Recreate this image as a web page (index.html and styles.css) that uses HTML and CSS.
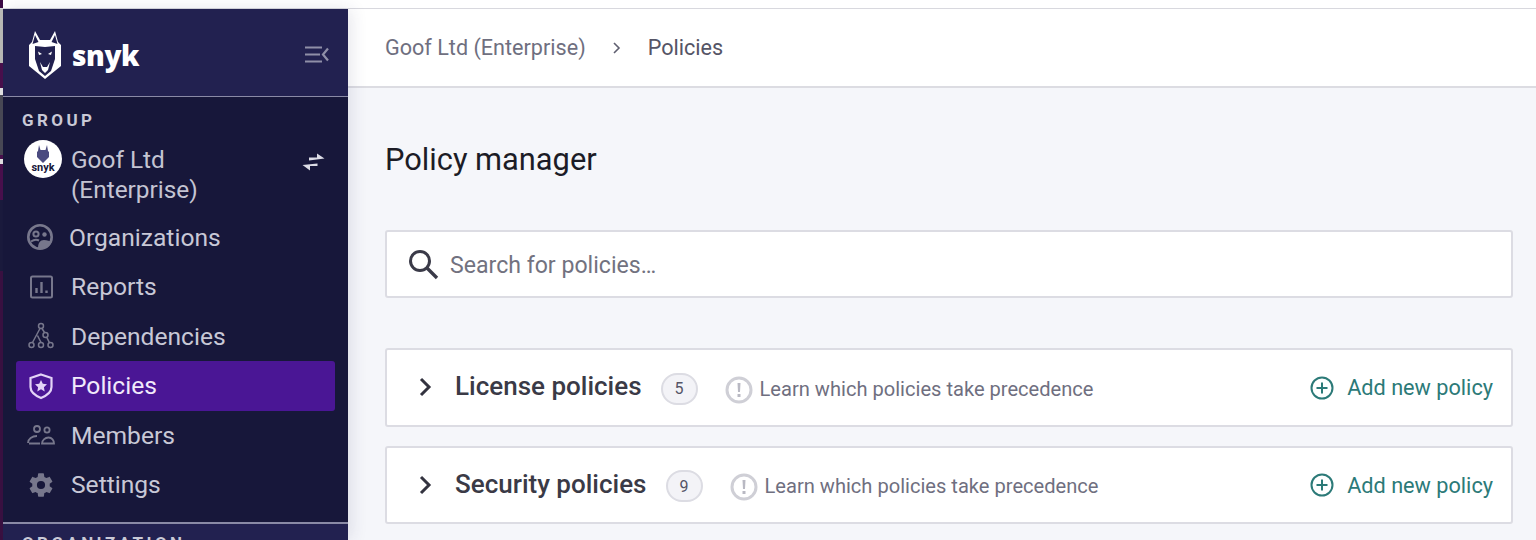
FILE: index.html
```html
<!DOCTYPE html>
<html lang="en">
<head>
<meta charset="utf-8">
<title>Policy manager</title>
<link rel="stylesheet" href="styles.css">
</head>
<body>
<div class="topstrip"><span class="topstrip-mark"></span></div>
<div class="shell">
  <div class="edge"></div>
  <aside class="sidebar">
    <div class="brand">
      <div class="logo">
        <svg class="logo-dog" width="32" height="48" viewBox="0 0 32 48">
          <path fill="#fff" d="M6 0l5 9h10l5-9 3 11 3 3v21L16 48 0 35V14l3-3z"/>
          <path fill="#222150" d="M6 4L3.500 13l6-2zM26 4l2.500 9-6-2z"/>
          <path fill="#222150" d="M6 15l10 1 10-1v13l-4 12-6 5-6-5-4-12z"/>
          <path fill="#fff" d="M11 31l2 8 3 3 3-3 2-8-3 5h-4zM9 20.500l4 2.500-3 1zM23 20.500l-4 2.500 3 1z"/>
        </svg>
        <span class="wordmark">snyk</span>
      </div>
      <svg class="collapse" width="24" height="17" viewBox="0 0 24 17"><path fill="none" stroke="#8f8fa8" stroke-width="2.200" d="M0 1.500h17M0 8.500h15M0 15.500h17M23 2.500l-5 6 5 6"/></svg>
    </div>
    <div class="group">
      <div class="group-label">GROUP</div>
      <div class="group-row">
        <div class="avatar">
          <svg width="14" height="18" viewBox="0 0 14 18"><path fill="#4b4b80" d="M3 0l1.500 5h5L11 0l1 6 1 1v5l-6 6-6-6V7l1-1z"/></svg>
          <span class="avatar-text">snyk</span>
        </div>
        <div class="group-name">Goof Ltd (Enterprise)</div>
        <svg class="swap" width="23" height="18" viewBox="0 0 23 18"><path fill="#dcdce6" d="M7 4.500h8V.5l7.500 5L7 7.500zM15.500 10.500V13H8v4.500L.5 12z"/></svg>
      </div>
    </div>
    <nav class="nav">
      <a class="nav-item nav-first">
        <svg width="28" height="28" viewBox="0 0 28 28"><circle cx="14" cy="14" r="11.700" fill="none" stroke="#77778c" stroke-width="2.600"/><circle cx="10" cy="11" r="2.600" fill="none" stroke="#77778c" stroke-width="2"/><circle cx="18.500" cy="11.500" r="2.200" fill="#77778c"/><path fill="#77778c" d="M12 25c0-5 2-8 6-8 3 0 6 1 7.500 2-1 4-6 7-11 7z"/><path fill="none" stroke="#77778c" stroke-width="2" d="M5 18.500c3-2 6-2 8-1"/></svg>
        <span>Organizations</span>
      </a>
      <a class="nav-item">
        <svg width="28" height="28" viewBox="0 0 28 28"><rect x="4" y="3.500" width="21" height="21" rx="1.500" fill="none" stroke="#77778c" stroke-width="2"/><path stroke="#77778c" stroke-width="2.400" d="M9.500 20v-5M14.500 20V9M19.500 20v-2.500"/></svg>
        <span>Reports</span>
      </a>
      <a class="nav-item">
        <svg width="28" height="28" viewBox="0 0 28 28" fill="none" stroke="#77778c" stroke-width="1.500"><circle cx="14" cy="4" r="2.500"/><circle cx="18.500" cy="13" r="2.500"/><circle cx="4.500" cy="23" r="2.500"/><circle cx="14" cy="23" r="2.500"/><circle cx="23.500" cy="23" r="2.500"/><path d="M13 6.500L5.500 20.500M15 6.500l2.500 4M10.500 13.500l3.500 7M19.800 15.300l2.600 5.300"/></svg>
        <span>Dependencies</span>
      </a>
      <a class="nav-item active">
        <svg width="28" height="28" viewBox="0 0 28 28"><path fill="none" stroke="#e3d3f7" stroke-width="2.200" d="M14 2.500l10.500 3.500v9c0 5-4.500 8.500-10.500 11C8 23.500 3.500 20 3.500 15V6z"/><path fill="#e3d3f7" d="M14 8l1.800 3.800 4.200.5-3.100 2.900.8 4.200-3.700-2.100-3.700 2.100.8-4.200L8 12.300l4.200-.5z"/></svg>
        <span>Policies</span>
      </a>
      <a class="nav-item">
        <svg width="28" height="28" viewBox="0 0 28 28" fill="none" stroke="#77778c" stroke-width="1.800"><circle cx="10" cy="8" r="3"/><circle cx="20" cy="9" r="2.600"/><path d="M1 22c0-4 4-7 9-7M2 22.500h11M15 22.500c0-3 3-6 6.500-6s5.500 3 5.500 6z"/></svg>
        <span>Members</span>
      </a>
      <a class="nav-item">
        <svg width="28" height="28" viewBox="0 0 24 24"><path fill="#77778c" d="M19.430 12.980c.04-.32.07-.64.07-.98s-.03-.66-.07-.98l2.110-1.650c.19-.15.24-.42.12-.64l-2-3.460c-.12-.22-.39-.3-.61-.22l-2.490 1c-.52-.4-1.080-.73-1.690-.98l-.38-2.650A.49.49 0 0 0 14 2h-4c-.25 0-.46.18-.49.42l-.38 2.650c-.61.25-1.170.59-1.690.98l-2.490-1c-.23-.09-.49 0-.61.22l-2 3.460c-.13.22-.07.49.12.64l2.110 1.650c-.04.32-.07.65-.07.98s.03.66.07.98l-2.110 1.650c-.19.15-.24.42-.12.64l2 3.460c.12.22.39.3.61.22l2.490-1c.52.4 1.080.73 1.690.98l.38 2.650c.03.24.24.42.49.42h4c.25 0 .46-.18.49-.42l.38-2.650c.61-.25 1.170-.59 1.690-.98l2.490 1c.23.09.49 0 .61-.22l2-3.460c.12-.22.07-.49-.12-.64l-2.110-1.650zM12 15.500a3.500 3.500 0 1 1 0-7 3.500 3.500 0 0 1 0 7z"/></svg>
        <span>Settings</span>
      </a>
    </nav>
    <div class="org"><span class="org-label">ORGANIZATION</span></div>
  </aside>
  <main class="main">
    <header class="crumbs">
      <span class="crumb">Goof Ltd (Enterprise)</span>
      <svg class="crumb-sep" width="10" height="14" viewBox="0 0 10 14"><path fill="none" stroke="#5f5f70" stroke-width="1.600" d="M2 2l5 5-5 5"/></svg>
      <span class="crumb-current">Policies</span>
    </header>
    <div class="content">
      <h1 class="title">Policy manager</h1>
      <div class="search">
        <svg width="34" height="34" viewBox="0 0 34 34"><circle cx="14" cy="14" r="9.500" fill="none" stroke="#3a3a48" stroke-width="3"/><path stroke="#3a3a48" stroke-width="3.400" d="M21 21l10 10"/></svg>
        <span class="placeholder">Search for policies…</span>
      </div>
      <section class="panel">
        <svg class="chev" width="14" height="20" viewBox="0 0 14 20"><path fill="none" stroke="#33333f" stroke-width="3" d="M2 2l8 8-8 8"/></svg>
        <h2 class="panel-title">License policies</h2>
        <span class="count">5</span>
        <svg class="info" width="28" height="28" viewBox="0 0 28 28"><circle cx="14" cy="14" r="12" fill="none" stroke="#cfcfd6" stroke-width="3"/><path fill="#b9b9c3" d="M12.500 7h3l-.5 9h-2zM12.500 18h3v3h-3z"/></svg>
        <span class="learn">Learn which policies take precedence</span>
        <a class="add"><svg width="24" height="24" viewBox="0 0 24 24" fill="none" stroke="#2c7a78" stroke-width="2"><circle cx="12" cy="12" r="10.500"/><path d="M12 6.500v11M6.500 12h11"/></svg><span>Add new policy</span></a>
      </section>
      <section class="panel">
        <svg class="chev" width="14" height="20" viewBox="0 0 14 20"><path fill="none" stroke="#33333f" stroke-width="3" d="M2 2l8 8-8 8"/></svg>
        <h2 class="panel-title">Security policies</h2>
        <span class="count">9</span>
        <svg class="info" width="28" height="28" viewBox="0 0 28 28"><circle cx="14" cy="14" r="12" fill="none" stroke="#cfcfd6" stroke-width="3"/><path fill="#b9b9c3" d="M12.500 7h3l-.5 9h-2zM12.500 18h3v3h-3z"/></svg>
        <span class="learn">Learn which policies take precedence</span>
        <a class="add"><svg width="24" height="24" viewBox="0 0 24 24" fill="none" stroke="#2c7a78" stroke-width="2"><circle cx="12" cy="12" r="10.500"/><path d="M12 6.500v11M6.500 12h11"/></svg><span>Add new policy</span></a>
      </section>
    </div>
  </main>
</div>
</body>
</html>
```
FILE: styles.css
```css
* { box-sizing: border-box; }
html, body { margin: 0; height: 540px; overflow: hidden; background: #fff; }
body { font-family: Roboto, "Liberation Sans", sans-serif; color: #33333f; }
.topstrip { height: 9px; border-bottom: 1px solid #d8d8de; display: flex; }
.topstrip-mark { width: 3px; height: 8px; background: #3b0a45; }
.shell { display: flex; height: 531px; }
.edge { width: 3px; background: linear-gradient(#bdbdb8 0 54px, #4a0f4c 54px 79px, #e6e6e6 79px 86px, #4a4a55 86px 146px, #4a0f4c 146px 150px, #e6e6e6 150px 155px, #4a0f4c 155px 191px, #1a1a3c 191px 262px, #3a1040 262px); }
.sidebar { width: 345px; flex: none; background: #17173a; display: flex; flex-direction: column; color: #cfcfdc; position: relative; box-shadow: 3px 0 16px rgba(40, 40, 90, .12); }
.brand { height: 88px; flex: none; background: #222150; border-bottom: 1px solid #8a8aa6; display: flex; align-items: center; justify-content: space-between; padding: 4px 19px 0 26px; }
.logo { display: flex; align-items: center; gap: 11px; }
.wordmark { font-family: "Open Sans", sans-serif; font-weight: 800; font-size: 28px; line-height: 40px; color: #fff; letter-spacing: -.4px; }
.group { padding: 13px 19px 0 19px; }
.group-label { font-size: 17px; line-height: 20px; font-weight: 700; letter-spacing: 3.400px; color: #c9c9d6; }
.group-row { display: flex; align-items: flex-start; margin-top: 10px; padding-left: 2px; }
.avatar { width: 38px; height: 38px; flex: none; border-radius: 50%; background: #fff; display: flex; flex-direction: column; align-items: center; justify-content: center; }
.avatar-text { font-size: 11px; line-height: 10px; font-weight: 700; color: #17173a; }
.group-name { width: 190px; margin-left: 9px; font-size: 24.400px; line-height: 30px; color: #c4c4d2; padding-top: 5px; }
.swap { margin: 13px 0 0 41px; }
.nav { display: flex; flex-direction: column; padding: 7.500px 13px 0; }
.nav-item { height: 49.500px; display: flex; align-items: center; gap: 16px; padding-left: 11px; font-size: 24.600px; color: #c8c8d6; border-radius: 3px; }
.nav-first { gap: 15px; margin-left: -1px; }
.nav-item.active { background: #4a1695; color: #f1e9fb; }
.org { margin-top: auto; height: 18px; background: #222150; border-top: 2px solid #8a8aa6; padding-left: 19px; overflow: hidden; }
.org-label { display: block; margin-top: 9px; font-size: 17px; line-height: 20px; font-weight: 700; letter-spacing: 3.400px; color: #c9c9d6; }
.main { flex: 1; display: flex; flex-direction: column; background: #f5f6fa; }
.crumbs { height: 79px; flex: none; background: #fff; border-bottom: 2px solid #dcdce2; display: flex; align-items: center; padding-left: 37px; font-size: 21.600px; }
.crumb { color: #6f6f80; }
.crumb-sep { margin: 0 26px 0 26px; }
.crumb-current { color: #555566; }
.content { padding: 0 23px 0 37px; flex: 1; }
.title { margin: 54px 0 0; font-size: 30.800px; line-height: 36px; font-weight: 400; color: #1c1c26; }
.search { margin-top: 52px; height: 68px; background: #fff; border: 2px solid #dcdce3; border-radius: 3px; display: flex; align-items: center; padding-left: 19px; gap: 10px; }
.placeholder { padding-top: 2px; font-size: 23.100px; color: #72727f; }
.panel { margin-top: 19px; height: 78.500px; background: #fff; border: 2px solid #dcdce3; border-radius: 3px; display: flex; align-items: center; padding: 0 18px 0 32px; }
.search + .panel { margin-top: 50px; }
.chev { flex: none; }
.panel-title { margin: 0 0 2px 22px; font-size: 26px; line-height: 32px; font-weight: 500; color: #3a3a46; }
.count { margin: 3px 0 0 19px; width: 37px; height: 32px; border: 2px solid #dcdce3; border-radius: 16px; background: #f3f3f7; display: flex; align-items: center; justify-content: center; font-size: 16px; color: #555566; }
.info { margin: 5px 0 0 27px; flex: none; }
.learn { margin-left: 7px; padding-top: 3px; font-size: 20.100px; color: #6f6f80; }
.add { margin-left: auto; padding-top: 1px; display: flex; align-items: center; gap: 13px; font-size: 21.700px; color: #2c7a78; }
```
